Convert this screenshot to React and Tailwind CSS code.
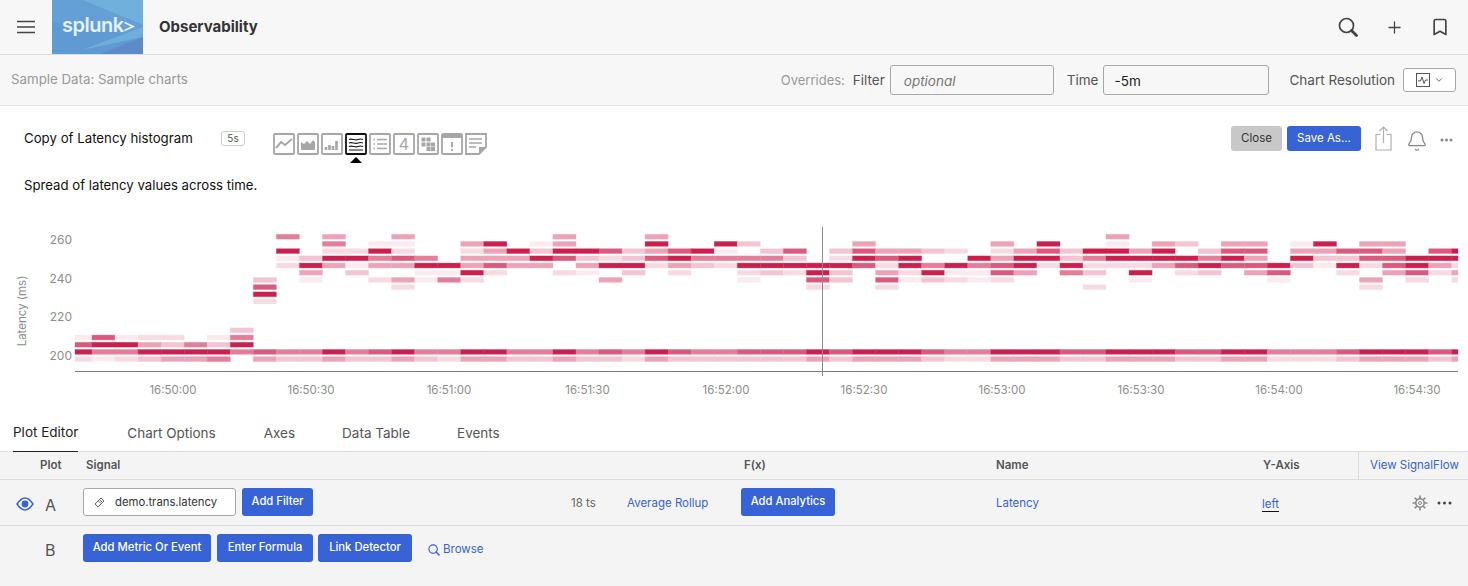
import { Plus, Bookmark, Bell, ChevronDown } from "lucide-react";

const LEVELS = {
  a: "#fbeaef",
  b: "#f8dae3",
  c: "#f3c5d2",
  d: "#eca3b7",
  e: "#e37e9a",
  f: "#d85a7d",
  g: "#c9204e",
};

// row -> "column+level" cells of the heatmap
const HEATMAP = {
  0: "9e 11d 14d 21d 25d 45d",
  1: "11e 13a 14a 17d 18g 20a 21d 25g 28g 29c 34d 40d 42g 45a 47d 48c 50d 51d 53a 54g 56d 57d",
  2: "9g 11b 12b 13g 14b 17b 18d 19g 20c 21g 22g 23f 24c 25d 26f 27g 28a 30c 31f 33c 34f 35d 36d 37c 38b 40b 41d 42f 43c 44g 45g 46d 47g 49c 50f 51f 53d 54d 55f 56f 57d 59f 60g",
  3: "9a 10c 11g 12g 13e 14f 15e 17d 18d 19d 20g 21f 22c 23b 24c 25f 26g 27e 28e 29e 30e 31c 33b 34g 35f 36g 39g 40d 41g 42g 43c 44e 45g 46g 47g 48g 49e 50g 51d 53g 54c 55c 56f 57f 58g 59g 60g",
  4: "9b 10g 11d 12a 13d 14d 15g 16g 17d 18f 19d 20d 22d 23g 24g 25b 26d 27c 28b 29g 30g 31g 32g 33g 34f 35b 36g 37e 38g 39e 40f 41g 42b 43g 44b 45b 46b 47d 48f 49g 50f 51f 52g 53c 54a 55g 56b 57f 58g 59d 60b",
  5: "10d 12c 15a 16a 17g 18b 21b 22a 24c 26b 29b 30c 31b 32g 33c 35d 36b 37g 38a 39a 40f 41d 43e 44c 46g 48b 49c 51d 52f 55b 57d 58f 59b 60d",
  6: "8c 10a 13b 14d 15a 16e 17b 23d 29a 32f 33c 35f 36a 37c 38b 39a 40b 46a 52a 56d 58b 60b",
  7: "8f 14b 32b 35b 44b 56b",
  8: "8g",
  9: "8b",
  13: "7c",
  14: "0a 1f 2a 3b 4b 6a 7e",
  15: "0f 1g 2g 3d 4c 5e 6c 7g",
  16: "0g 1e 2e 3g 4g 5g 6g 7e 8f 9e 10e 11g 12e 13f 14g 15e 16e 17g 18g 19e 20e 21g 22e 23f 24e 25g 26f 27e 28e 29f 30f 31f 32g 33f 34g 35g 36g 37f 38e 39e 40g 41g 42g 43f 44f 45g 46g 47g 48f 49f 50g 51g 52e 53e 54e 55f 56g 57g 58g 59f 60g",
  17: "0b 1a 2b 3c 4d 5d 6e 8d 9c 10c 11d 12c 13c 14d 15c 16b 17d 18d 19c 20c 21d 22c 23c 24b 25d 26c 27c 28c 29c 30c 31c 32d 33c 34d 35d 36d 37c 38b 39b 40d 41d 42d 43c 44c 45d 46d 47d 48c 49c 50d 51d 52b 53b 54b 55c 56d 57d 58d 59c 60d",
};

const CELLS = Object.entries(HEATMAP).flatMap(([row, cells]) =>
  cells.split(" ").map((c) => ({
    row: Number(row),
    col: parseInt(c, 10),
    color: LEVELS[c.slice(-1)],
  }))
);

const TICKS = [
  ["16:50:00", 173],
  ["16:50:30", 311],
  ["16:51:00", 449],
  ["16:51:30", 587.5],
  ["16:52:00", 726],
  ["16:52:30", 864],
  ["16:53:00", 1002],
  ["16:53:30", 1141],
  ["16:54:00", 1279],
  ["16:54:30", 1417],
];

function Heatmap() {
  const top = 225;
  return (
    <svg width="1468" height="176" viewBox={`0 ${top} 1468 176`} className="block">
      {CELLS.map((c) => {
        const x0 = c.col === 0 ? 75 : 92 + 23.046 * (c.col - 1);
        const x1 = Math.min(92 + 23.046 * c.col, 1458);
        const y = 234.3 + 7.2 * c.row;
        return (
          <rect
            key={`${c.row}-${c.col}`}
            x={x0}
            y={y}
            width={x1 - x0}
            height="4.8"
            fill={c.color}
            stroke={c.color}
            strokeOpacity="0.3"
            strokeWidth="1"
          />
        );
      })}
      <line x1="75" x2="1458" y1="371.5" y2="371.5" stroke="#7c7c7c" />
      <line x1="822.5" x2="822.5" y1="227" y2="376" stroke="#8c8c8c" />
      {[["260", 240], ["240", 279], ["220", 317], ["200", 356]].map(([t, y]) => (
        <text key={t} x="72" y={y + 4} textAnchor="end" fontSize="12" fill="#8d8d8d">
          {t}
        </text>
      ))}
      {TICKS.map(([t, x]) => (
        <text key={t} x={x} y="394" textAnchor="middle" fontSize="11.5" fill="#8d8d8d">
          {t}
        </text>
      ))}
      <text transform="translate(26 311) rotate(-90)" textAnchor="middle" fontSize="11.5" fill="#8d8d8d">
        Latency (ms)
      </text>
    </svg>
  );
}

function Logo() {
  return (
    <svg width="91" height="54" viewBox="0 0 91 54" className="block shrink-0">
      <rect width="91" height="54" fill="#5f9ad3" />
      <polygon points="30,0 91,0 91,25" fill="#6fb0dc" />
      <polygon points="0,0 30,0 91,25 91,37 0,22" fill="#649fd6" />
      <polygon points="30,50 91,37 91,27" fill="#74b6dd" opacity="0.7" />
      <polygon points="48,54 91,37 91,54" fill="#5c8bc8" />
      <text x="10" y="31.5" fontSize="20" fontWeight="600" fill="#e6f1f8" letterSpacing="-0.5">
        splunk
      </text>
      <path d="M72.5 22.5 L81 26.5 L72.5 30.5" fill="none" stroke="#e6f1f8" strokeWidth="1.8" />
    </svg>
  );
}

function TypeIcon({ active, children }) {
  const c = active ? "#111" : "#a6a6a6";
  return (
    <svg width="22" height="22" viewBox="0 0 22 22" className="block shrink-0" fill="none" stroke={c} color={c}>
      <rect x="1" y="1" width="20" height="20" rx="1" strokeWidth="1.8" />
      {children}
    </svg>
  );
}

function ChartTypes() {
  return (
    <div className="relative flex gap-[2px] ml-[28px] mt-[11px]">
      <TypeIcon>
        <path d="M3 15 L8 9 L12 12 L19 6" strokeWidth="2" />
      </TypeIcon>
      <TypeIcon>
        <path d="M4 17 V9 L7 11 L10 8 L13 11 L16 7 L18 9 V17 Z" fill="currentColor" stroke="none" />
      </TypeIcon>
      <TypeIcon>
        <path d="M5 17 V14 M8.5 17 V12 M12 17 V13 M15.5 17 V8" strokeWidth="2.6" />
      </TypeIcon>
      <TypeIcon active>
        <path d="M4 6.5 C7 5 10 8 13 6.5 C15 5.5 16.5 6 18 6.5 M4 10 C7 8.5 10 11.5 13 10 C15 9 16.5 9.5 18 10 M4 13.5 C7 12 10 15 13 13.5 C15 12.5 16.5 13 18 13.5 M4 17 H18" strokeWidth="1.2" />
      </TypeIcon>
      <TypeIcon>
        <path d="M4.5 6.5 H6 M4.5 11 H6 M4.5 15.5 H6 M8 6.5 H18 M8 11 H18 M8 15.5 H18" strokeWidth="1.3" />
      </TypeIcon>
      <TypeIcon>
        <text x="11" y="16.5" textAnchor="middle" fontSize="16" fill="#a6a6a6" stroke="none">4</text>
      </TypeIcon>
      <TypeIcon>
        <path d="M4.5 4.5 H8.5 V8.5 H4.5 Z M9.5 4.5 H13.5 V8.5 H9.5 Z M4.5 9.5 H8.5 V13.5 H4.5 Z M9.5 9.5 H13.5 V13.5 H9.5 Z M14 9.5 H18 V13.5 H14 Z M9.5 14 H13.5 V18 H9.5 Z M14 14 H18 V18 H14 Z" fill="currentColor" stroke="none" />
      </TypeIcon>
      <TypeIcon>
        <path d="M1 1 H21 V5 H1 Z" fill="currentColor" stroke="none" />
        <path d="M11 9 V14.5 M11 16 V18" strokeWidth="1.8" />
      </TypeIcon>
      <svg width="22" height="22" viewBox="0 0 22 22" className="block shrink-0" fill="none" stroke="#a6a6a6">
        <path d="M1 1 H21 V14 L14 21 H1 Z" strokeWidth="1.8" />
        <path d="M14 21 V14 H21 L14 21 Z" fill="#a6a6a6" stroke="none" />
        <path d="M4 6 H17 M4 10 H17 M4 14 H11" strokeWidth="1.5" />
      </svg>
      <div className="absolute left-[77px] top-[24px] w-0 h-0 border-l-[6px] border-r-[6px] border-b-[6px] border-l-transparent border-r-transparent border-b-black" />
    </div>
  );
}

function BlueButton({ children, className = "" }) {
  return (
    <button className={`h-[28px] rounded-[3px] bg-[#3863d6] text-white text-[11.25px] font-medium pb-[1px] shrink-0 ${className}`}>
      {children}
    </button>
  );
}

function Dots({ color, wide }) {
  return (
    <svg width={wide ? 15 : 13} height="4" viewBox={wide ? "0 0 15 4" : "0 0 13 4"} className="block shrink-0" fill={color}>
      <circle cx="2" cy="2" r="1.5" />
      <circle cx={wide ? 7.5 : 6.5} cy="2" r="1.5" />
      <circle cx={wide ? 13 : 11} cy="2" r="1.5" />
    </svg>
  );
}

function MagnifierIcon({ size, color, width, handle }) {
  return (
    <svg width={size} height={size} viewBox="0 0 20 20" fill="none" stroke={color} className="block shrink-0">
      <circle cx="8.5" cy="8.5" r="7" strokeWidth={width} />
      <path d="M13.5 13.5 L18.5 18.5" strokeWidth={handle} strokeLinecap="round" />
    </svg>
  );
}

const TABS = [
  ["Chart Options", "ml-[49px]"],
  ["Axes", "ml-[48px]"],
  ["Data Table", "ml-[47px]"],
  ["Events", "ml-[47px]"],
];

export default function App() {
  return (
    <div className="w-[1468px] h-[586px] overflow-hidden flex flex-col bg-white text-[#222] font-['Inter','Noto_Sans',sans-serif]">
      {/* top bar */}
      <header className="h-[55px] shrink-0 flex items-center bg-[#f7f7f7] border-b border-[#dcdcdc]">
        <svg width="18" height="14" viewBox="0 0 18 14" className="block ml-[17px] mr-[17px]" stroke="#444" strokeWidth="1.7">
          <path d="M0 1.5 H18 M0 7 H18 M0 12.5 H18" />
        </svg>
        <Logo />
        <span className="ml-[16px] text-[15px] font-bold text-[#333]">Observability</span>
        <div className="ml-auto">
          <MagnifierIcon size={20} color="#444" width={1.7} handle={2.8} />
        </div>
        <Plus size={19} strokeWidth={1.6} className="ml-[27px] text-[#444]" />
        <Bookmark size={20} strokeWidth={2} className="ml-[26px] mr-[18px] text-[#444]" />
      </header>

      {/* overrides bar */}
      <div className="h-[51px] shrink-0 flex items-center bg-[#f7f7f7] border-b border-[#e4e4e4] pl-[11px] text-[13.5px]">
        <span className="text-[13.3px] text-[#999]">Sample Data: Sample charts</span>
        <span className="ml-auto text-[13px] text-[#999] mt-[1px]">Overrides:</span>
        <span className="ml-[8px] text-[#555] mt-[1px]">Filter</span>
        <div className="ml-[5px] w-[164px] h-[30px] flex items-center pl-[13px] pt-[2px] rounded-[3px] border border-[#a8a8a8] bg-[#f7f7f7] italic text-[#777]">
          optional
        </div>
        <span className="ml-[13px] text-[#555] mt-[1px]">Time</span>
        <div className="ml-[5px] w-[166px] h-[30px] flex items-center pl-[10px] pt-[2px] rounded-[3px] border border-[#a8a8a8] bg-[#f7f7f7] text-[#222]">
          -5m
        </div>
        <span className="ml-[20px] text-[#555] mt-[1px]">Chart Resolution</span>
        <div className="ml-[8px] mr-[12px] w-[53px] h-[24px] flex items-center justify-center gap-[4px] rounded-[3px] border border-[#a8a8a8] bg-white">
          <svg width="14" height="14" viewBox="0 0 14 14" fill="none" stroke="#555" className="block">
            <rect x="0.5" y="0.5" width="13" height="13" />
            <path d="M2 8 H4.5 L6 4 L8 10.5 L9.5 7 H12" />
          </svg>
          <ChevronDown size={10} className="text-[#555]" />
        </div>
      </div>

      {/* chart title row */}
      <div className="h-[54px] shrink-0 flex items-center pl-[24px] pt-[11px]">
        <span className="text-[13.25px] text-[#111] w-[197px] shrink-0">Copy of Latency histogram</span>
        <span className="w-[24px] h-[15px] flex items-center justify-center rounded-[3px] border border-[#ccc] text-[10px] text-[#555]">5s</span>
        <ChartTypes />
        <button className="ml-auto w-[51px] h-[25px] rounded-[3px] bg-[#c8c8c8] text-[11.5px] text-[#333]">Close</button>
        <button className="ml-[5px] w-[74px] h-[25px] rounded-[3px] bg-[#3863d6] text-[11.5px] text-white">Save As...</button>
        <svg width="17" height="25" viewBox="0 0 17 25" fill="none" stroke="#b0b0b0" strokeWidth="1.2" className="block ml-[14px]">
          <path d="M5.5 8.5 H1 V24 H16 V8.5 H11.5 M8.5 17 V1 M4.5 5 L8.5 1 L12.5 5" />
        </svg>
        <Bell size={22} strokeWidth={1.4} className="ml-[14px] mt-[4px] text-[#888]" />
        <div className="ml-[12px] mr-[15px] mt-[3px]">
          <Dots color="#888" />
        </div>
      </div>

      <p className="h-[36px] shrink-0 pl-[24px] pt-[16px] text-[13.2px] leading-[18px] text-[#111]">Spread of latency values across time.</p>

      <div className="shrink-0 h-[29px]" />
      <div className="shrink-0 h-[176px]">
        <Heatmap />
      </div>

      {/* tabs */}
      <div className="h-[51px] shrink-0 flex items-end pl-[13px] border-b border-[#dcdcdc] text-[13.5px] text-[#555]">
        <span className="h-[31px] pt-[1px] text-[#222] border-b border-[#222] mb-[-1px]">Plot Editor</span>
        {TABS.map(([t, m]) => (
          <span key={t} className={`h-[31px] pt-[3px] ${m}`}>{t}</span>
        ))}
      </div>

      <div className="flex-1 bg-[#f4f4f4] text-[11.3px]">
        {/* table header */}
        <div className="h-[28px] flex items-center border-b border-[#dcdcdc] font-semibold text-[11.5px] text-[#555]">
          <span className="ml-[40px] w-[46px]">Plot</span>
          <span className="w-[658px]">Signal</span>
          <span className="w-[252px]">F(x)</span>
          <span className="w-[267px]">Name</span>
          <span className="w-[95px]">Y-Axis</span>
          <span className="h-full flex items-center pl-[11px] border-l border-[#dcdcdc] font-normal text-[#3863d6]">View SignalFlow</span>
        </div>

        {/* row A */}
        <div className="h-[46px] flex items-center border-b border-[#dcdcdc] text-[#3863d6]">
          <svg width="18" height="14" viewBox="0 0 18 14" className="block ml-[16px] mt-[3px] shrink-0" fill="none" stroke="#3863d6" strokeWidth="1.5">
            <path d="M1 7 C4 2.5 6.5 1 9 1 C11.5 1 14 2.5 17 7 C14 11.5 11.5 13 9 13 C6.5 13 4 11.5 1 7 Z" />
            <circle cx="9" cy="7" r="3.4" fill="#3863d6" stroke="none" />
          </svg>
          <span className="ml-[11px] w-[38px] mt-[4px] text-[16px] text-[#555]">A</span>
          <div className="w-[153px] h-[28px] flex items-center pl-[10px] rounded-[3px] border border-[#a8a8a8] bg-white text-[#333] shrink-0 mt-[-1px]">
            <svg width="11" height="11" viewBox="0 0 11 11" fill="none" stroke="#666" className="block mr-[10px] shrink-0">
              <path d="M7 1 L10 4 L4 10 L1 7 Z M4.5 4 L7 6.5 M6 3 L8 5" />
            </svg>
            demo.trans.latency
          </div>
          <BlueButton className="ml-[6px] w-[71px] mt-[-1px]">Add Filter</BlueButton>
          <span className="ml-[258px] w-[56px] mt-[3px] text-[11.5px] text-[#666] shrink-0">18 ts</span>
          <span className="w-[114px] mt-[3px] text-[11.5px] shrink-0">Average Rollup</span>
          <BlueButton className="w-[94px] mt-[-1px]">Add Analytics</BlueButton>
          <span className="ml-[161px] w-[266px] mt-[3px] text-[11.5px] shrink-0">Latency</span>
          <span className="border-b border-[#111] mt-[3px] text-[11.5px] leading-[14px]">left</span>
          <svg width="16" height="16" viewBox="0 0 16 16" fill="none" stroke="#888" className="block ml-[133px] shrink-0">
            <circle cx="8" cy="8" r="4.2" strokeWidth="1.5" />
            <circle cx="8" cy="8" r="1.5" strokeWidth="1" />
            <path d="M8 0.5 V3.5 M8 12.5 V15.5 M0.5 8 H3.5 M12.5 8 H15.5 M2.7 2.7 L4.8 4.8 M11.2 11.2 L13.3 13.3 M2.7 13.3 L4.8 11.2 M11.2 4.8 L13.3 2.7" strokeWidth="1.6" />
          </svg>
          <div className="ml-[9px]">
            <Dots color="#444" wide />
          </div>
        </div>

        {/* row B */}
        <div className="h-[44px] flex items-center">
          <span className="ml-[45px] w-[38px] mt-[3px] text-[16px] text-[#555]">B</span>
          <BlueButton className="w-[128px]">Add Metric Or Event</BlueButton>
          <BlueButton className="ml-[6px] w-[96px]">Enter Formula</BlueButton>
          <BlueButton className="ml-[5px] w-[94px]">Link Detector</BlueButton>
          <div className="ml-[16px] mt-[3px]">
            <MagnifierIcon size={12} color="#3863d6" width={2} handle={2.4} />
          </div>
          <span className="ml-[3px] mt-[3px] text-[11.5px] text-[#3863d6]">Browse</span>
        </div>
      </div>
    </div>
  );
}
